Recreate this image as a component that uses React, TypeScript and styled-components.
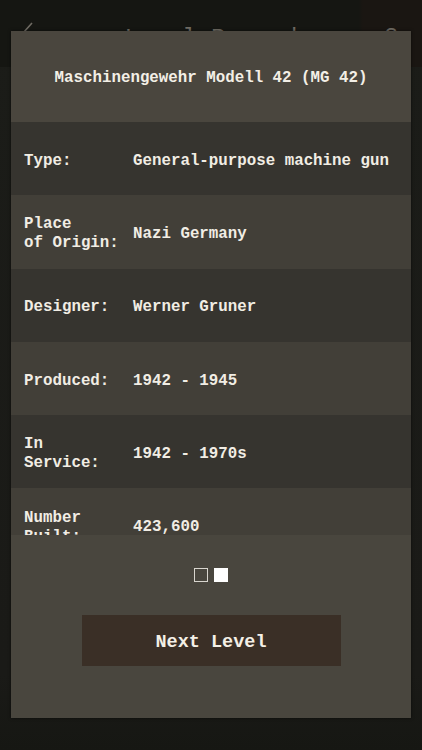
import React from "react";
import styled, { createGlobalStyle } from "styled-components";

const Global = createGlobalStyle`
  html, body { margin: 0; padding: 0; background: #181915; }
  body { width: 422px; height: 750px; overflow: hidden; }
  * { box-sizing: border-box; }
`;

const FONT = `"Liberation Mono", "DejaVu Sans Mono", monospace`;

const Screen = styled.div`
  position: relative;
  width: 422px;
  height: 750px;
  background: linear-gradient(180deg, #1b1c18 0%, #1a1a17 90%, #161713 100%);
  font-family: ${FONT};
  overflow: hidden;
`;

const NavBar = styled.div`
  height: 67px;
  display: grid;
  grid-template-columns: 60px 1fr 60px;
  align-items: start;
  padding-top: 20px;
  background: linear-gradient(90deg, #151612 0%, #151612 85%, #1a1612 86%, #1a1612 100%);
  color: #6f6b63;
`;

const NavTitle = styled.div`
  text-align: center;
  font-size: 24px;
  line-height: 28px;
  padding-top: 5px;
  font-family: ${FONT};
`;

const NavIcon = styled.div<{ $right?: boolean }>`
  display: flex;
  justify-content: ${(p) => (p.$right ? "flex-end" : "flex-start")};
  padding: ${(p) => (p.$right ? "5px 24px 0 0" : "1px 0 0 22px")};
  font-size: 22px;
  line-height: 26px;
`;

const Overlay = styled.div`
  position: absolute;
  left: 11px;
  top: 31px;
  width: 400px;
  height: 687px;
  display: flex;
  flex-direction: column;
  box-shadow: 0 0 3px rgba(0, 0, 0, 0.6);
`;

const TitleBar = styled.div`
  height: 91px;
  flex: none;
  background: #4a463e;
  display: flex;
  align-items: center;
  justify-content: center;
  color: #f3efe6;
  font-size: 15.8px;
  font-weight: bold;
  padding-top: 2px;
`;

const List = styled.div`
  height: 413px;
  flex: none;
  overflow: hidden;
`;

const Row = styled.div<{ $light: boolean }>`
  height: 73.3px;
  display: grid;
  grid-template-columns: 109px 1fr;
  align-items: center;
  padding: 5px 0 0 13px;
  background: ${(p) => (p.$light ? "#423f38" : "#36342f")};
  color: #f1ede4;
  font-size: 15.8px;
  font-weight: bold;
  line-height: 19px;
`;

const Label = styled.div`
  white-space: pre-line;
`;

const Value = styled.div`
  white-space: nowrap;
`;

const Footer = styled.div`
  flex: 1;
  background: #49463e;
  display: flex;
  flex-direction: column;
  align-items: center;
  padding-top: 33px;
`;

const Pager = styled.div`
  display: flex;
  gap: 6px;
`;

const Dot = styled.div<{ $active: boolean }>`
  width: 14px;
  height: 14px;
  border: 1.5px solid ${(p) => (p.$active ? "#ffffff" : "#d8d5ce")};
  background: ${(p) => (p.$active ? "#ffffff" : "transparent")};
`;

const NextButton = styled.button`
  margin-top: 33px;
  width: 259px;
  height: 51px;
  border: none;
  padding: 3px 0 0;
  background: #3a2f26;
  color: #f4f0e6;
  font-family: ${FONT};
  font-weight: bold;
  font-size: 18.5px;
  display: flex;
  align-items: center;
  justify-content: center;
`;

const rows: [string, string][] = [
  ["Type:", "General-purpose machine gun"],
  ["Place\nof Origin:", "Nazi Germany"],
  ["Designer:", "Werner Gruner"],
  ["Produced:", "1942 - 1945"],
  ["In\nService:", "1942 - 1970s"],
  ["Number\nBuilt:", "423,600"],
];

export default function App() {
  return (
    <Screen>
      <Global />
      <NavBar>
        <NavIcon>
          <svg width="12" height="22" viewBox="0 0 12 22">
            <path d="M10 2 L2 11 L10 20" stroke="#6f6b63" strokeWidth="1.6" fill="none" />
          </svg>
        </NavIcon>
        <NavTitle>Level Passed</NavTitle>
        <NavIcon $right>?</NavIcon>
      </NavBar>
      <Overlay>
        <TitleBar>Maschinengewehr Modell 42 (MG 42)</TitleBar>
        <List>
          {rows.map(([l, v], i) => (
            <Row key={l} $light={i % 2 === 1}>
              <Label>{l}</Label>
              <Value>{v}</Value>
            </Row>
          ))}
        </List>
        <Footer>
          <Pager>
            <Dot $active={false} />
            <Dot $active />
          </Pager>
          <NextButton>Next Level</NextButton>
        </Footer>
      </Overlay>
    </Screen>
  );
}
